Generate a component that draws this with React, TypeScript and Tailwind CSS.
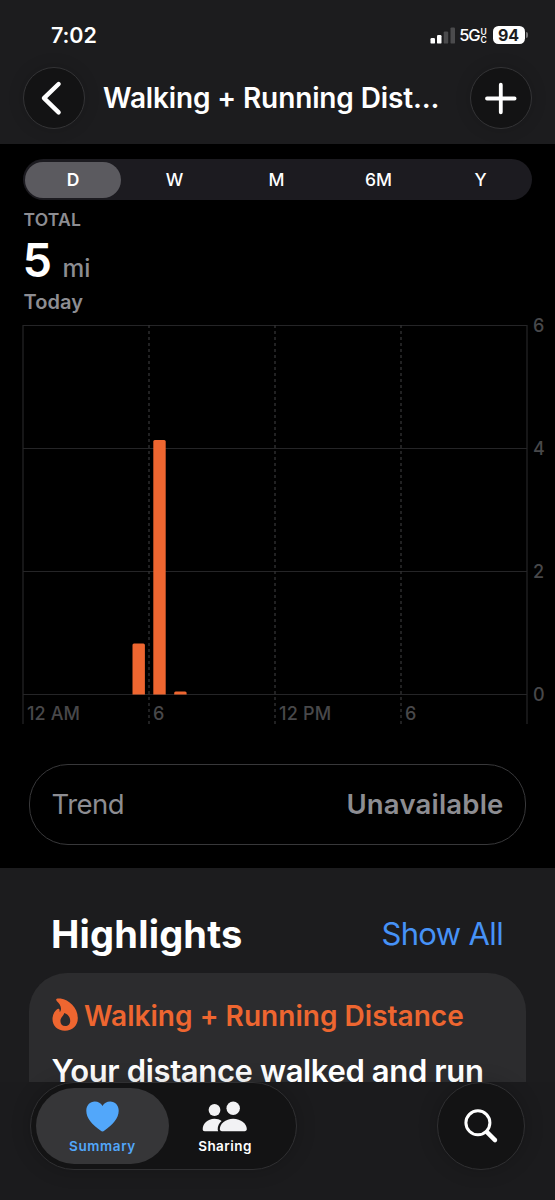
const ranges = ["D", "W", "M", "6M", "Y"];

const bars = [
  { x: 132.5, y: 643.5 },
  { x: 153.3, y: 440 },
  { x: 174.2, y: 691.5 },
];

const timeTicks = [
  { x: 149, label: "6" },
  { x: 275, label: "12 PM" },
  { x: 401, label: "6" },
];

const distanceTicks = [
  { y: 325.5, label: "6" },
  { y: 448.5, label: "4" },
  { y: 571.5, label: "2" },
  { y: 694.5, label: "0" },
];

function StatusBar() {
  return (
    <div className="flex h-[67px] items-start justify-between pt-[25px] pr-[27px] pl-[51px]">
      <span className="text-[21.5px] leading-[21px] font-semibold tracking-[-0.1px]">7:02</span>
      <div className="flex h-[20px] items-center">
        <svg width="26" height="17" viewBox="0 0 26 17" className="mr-[3.5px]">
          <rect x="0.5" y="11" width="4.5" height="5.6" rx="1.2" fill="#fff" />
          <rect x="7" y="8" width="4.5" height="8.6" rx="1.2" fill="#fff" />
          <rect x="13.7" y="4.4" width="4.5" height="12.2" rx="1.2" fill="#4b4b4d" />
          <rect x="20.5" y="0.4" width="4.5" height="16.2" rx="1.2" fill="#4b4b4d" />
        </svg>
        <span className="text-[16.5px] leading-[20px] font-medium tracking-[-1.1px]">5G</span>
        <span className="mr-[5.5px] ml-[1px] flex w-[6.5px] flex-col pt-px text-[8.5px] leading-[8px] font-semibold">
          <span>U</span>
          <span>C</span>
        </span>
        <span className="h-[18px] w-[32px] rounded-[5.5px] bg-white text-center text-[16px] leading-[18px] font-bold text-[#1c1c1e]">
          94
        </span>
        <span className="ml-[1px] h-[6px] w-[2.5px] rounded-r-full bg-[#767678]" />
      </div>
    </div>
  );
}

function Header() {
  return (
    <header className="h-[143.5px] bg-[#1c1c1e]">
      <StatusBar />
      <div className="flex items-center pr-[23.5px] pl-[23px]">
        <button className="flex size-[62px] shrink-0 items-center justify-center rounded-full border border-[#343436] bg-[#131314] shadow-[0_0_16px_rgba(0,0,0,0.15)]">
          <svg width="62" height="62" viewBox="0 0 62 62" fill="none" stroke="#fff" strokeWidth="4.4" strokeLinecap="round" strokeLinejoin="round" className="shrink-0">
            <path d="M35.6 17L21 31.2l14.6 14.2" />
          </svg>
        </button>
        <h1 className="flex-1 pl-[18px] text-[28px] leading-[62px] font-semibold tracking-[-0.13px] whitespace-nowrap">
          Walking + Running Dist...
        </h1>
        <button className="flex size-[62px] shrink-0 items-center justify-center rounded-full border border-[#343436] bg-[#131314] shadow-[0_0_16px_rgba(0,0,0,0.15)]">
          <svg width="62" height="62" viewBox="0 0 62 62" fill="none" stroke="#fff" strokeWidth="3.8" strokeLinecap="round" className="shrink-0">
            <path d="M17 31.5h27.6M30.8 17.7v27.6" />
          </svg>
        </button>
      </div>
    </header>
  );
}

function RangePicker() {
  return (
    <div className="mx-[23px] grid h-[41px] grid-cols-[96px_repeat(4,102px)] rounded-full bg-[#1c1b20] py-[2.5px] pl-[2px]">
      {ranges.map((r, i) => (
        <button
          key={r}
          className={
            i === 0
              ? "rounded-full bg-[#5b5a5f] text-[17.5px] leading-[36px] font-semibold"
              : "pl-[5px] text-[17.5px] leading-[36px] font-medium"
          }
        >
          {r}
        </button>
      ))}
    </div>
  );
}

function Chart() {
  return (
    <svg width="555" height="426" viewBox="0 314 555 426" className="block">
      <g stroke="#252527" strokeWidth="1.2">
        {distanceTicks.map((t) => (
          <line key={t.y} x1="23" x2="527" y1={t.y} y2={t.y} />
        ))}
        <line x1="23" x2="23" y1="325" y2="724" />
        <line x1="527" x2="527" y1="325" y2="724" />
      </g>
      {timeTicks.map((t) => (
        <line key={t.x} x1={t.x} x2={t.x} y1="325" y2="724" stroke="#333335" strokeWidth="1.3" strokeDasharray="3 3" />
      ))}
      <g fill="#ee6630">
        {bars.map((b) => (
          <path key={b.x} d={`M${b.x} 694.5V${b.y + 1.5}q0-1.5 1.5-1.5h9.4q1.5 0 1.5 1.5V694.5z`} />
        ))}
      </g>
      <g fill="#48484a" fontSize="18" fontWeight="500">
        {distanceTicks.map((t) => (
          <text key={t.y} x="533" y={t.y + 6.5}>
            {t.label}
          </text>
        ))}
        <text x="27" y="719.5" textLength="53">12 AM</text>
        {timeTicks.map((t) => (
          <text key={t.x} x={t.x + 4} y="719.5" letterSpacing="0.2">
            {t.label}
          </text>
        ))}
      </g>
    </svg>
  );
}

function Summary() {
  return (
    <section className="h-[724px] bg-black pt-[15.5px]">
      <RangePicker />
      <div className="px-[23.5px] pt-[8px] text-[#8d8d92]">
        <div className="text-[17.5px] leading-[24px] font-semibold tracking-[0.2px]">TOTAL</div>
        <div className="flex h-[58px] items-baseline leading-[56px]">
          <span className="-ml-px text-[47px] font-semibold text-white">5</span>
          <span className="ml-[10.5px] text-[24.5px] font-medium">mi</span>
        </div>
        <div className="text-[20px] leading-[24px] font-semibold tracking-[0.1px]">Today</div>
      </div>
      <Chart />
      <div className="mx-[29px] mt-[24px] flex h-[81px] items-center justify-between rounded-[39px] border-[1.5px] border-[#38383a] px-[21.5px] text-[27.5px] text-[#8d8d92]">
        <span className="tracking-[-0.5px]">Trend</span>
        <span className="font-semibold tracking-[0.2px]">Unavailable</span>
      </div>
    </section>
  );
}

function FlameIcon() {
  return (
    <svg width="26" height="33" viewBox="0 0 26 33" className="-mt-[2px] shrink-0">
      <path
        fill="#ee6630"
        fillRule="evenodd"
        d="M4.2 1.2C4.6.3 6 .2 8.6.6 17 2 25.8 9.5 25.8 20.3c0 7.4-5.4 12.4-12.9 12.4C5.6 32.700.5 27.8.5 21c0-5 2.700-8 4.300-9.500 1.300-1.300 2.800-.6 2.800.7l.1 1.900c.9-.8 1.300-2 1.300-3.300C9 7.800 7.400 5.500 4.900 3.200 4.300 2.600 4 1.800 4.200 1.200zM12.300 15c-.5 2.800-3.900 4.300-3.900 8 0 3 1.900 5 4.800 5 3 0 5-2 5-5.100 0-4-2.700-7-5.900-7.900z"
      />
    </svg>
  );
}

function Highlights() {
  return (
    <section className="h-[214.5px] overflow-hidden bg-[#1c1c1e] px-[29px] pt-[42px]">
      <div className="flex h-[49px] items-center justify-between px-[23px]">
        <h2 className="-ml-px text-[38px] leading-[48px] font-bold tracking-[0.2px]">Highlights</h2>
        <a className="text-[31px] leading-[48px] tracking-[-0.65px] text-[#4692f7]">Show All</a>
      </div>
      <article className="mt-[14px] h-[200px] rounded-[38px] bg-[#2c2c2e] pt-[24px] pl-[23px]">
        <div className="flex h-[38px] items-center gap-[6px] text-[28px] font-semibold tracking-[0.03px] text-[#ee6630]">
          <FlameIcon />
          <span className="whitespace-nowrap">Walking + Running Distance</span>
        </div>
        <p className="mt-[16px] -ml-[0.5px] text-[31px] leading-[40px] font-semibold tracking-[-0.36px] whitespace-nowrap">
          Your distance walked and run
        </p>
      </article>
    </section>
  );
}

function TabBar() {
  return (
    <nav className="flex h-[118px] justify-between bg-[#1b1b1d] pr-[30px] pl-[30px]">
      <div className="flex h-[88px] w-[267px] rounded-full border border-[#303032] bg-[#131314] p-[5px] shadow-[0_0_20px_rgba(0,0,0,0.2)]">
        <button className="flex w-[133px] flex-col items-center rounded-full bg-[#363638] pt-[13px] text-[#52a7fa]">
          <svg width="33" height="31" viewBox="0 0 33 31" fill="currentColor">
            <path d="M16.5 30.5c-.6 0-1.300-.5-2-1C6.300 24 .3 17.200.3 9.800.3 4.300 4 .5 8.800.5c3.400 0 6.100 1.700 7.700 4.500C18.100 2.200 20.800.5 24.200.5c4.800 0 8.500 3.800 8.500 9.300 0 7.400-6 14.200-14.200 19.700-.7.500-1.400 1-2 1z" />
          </svg>
          <span className="mt-[5px] text-[13.5px] leading-[18px] font-semibold tracking-[0.6px]">Summary</span>
        </button>
        <button className="flex w-[112px] flex-col items-center pt-[13px]">
          <svg width="46" height="31" viewBox="0 0 46 31" fill="#f2f2f4">
            <circle cx="12.5" cy="9" r="5.9" />
            <path d="M.7 28.200C.7 23 5.500 17.800 12.400 17.800c2.800 0 5.300.8 7.200 2.200-2.500 2.100-4 5.200-3.900 8.200 0 .8.200 1.500.5 2H2.700c-1.300 0-2-.7-2-2z" />
            <circle cx="31.2" cy="7.2" r="6.7" />
            <path d="M17.800 28.100c0-5.300 5.600-10.400 13.400-10.400S44.800 22.800 44.800 28.100c0 1.400-.8 2.100-2.200 2.100H20c-1.400 0-2.200-.7-2.200-2.100z" />
          </svg>
          <span className="mt-[5px] text-[13.5px] leading-[18px] font-semibold tracking-[0.45px]">Sharing</span>
        </button>
      </div>
      <button className="flex size-[88px] items-center justify-center rounded-full border border-[#303032] bg-[#131314] shadow-[0_0_20px_rgba(0,0,0,0.2)]">
        <svg width="88" height="88" viewBox="0 0 88 88" fill="none" stroke="#fff" strokeLinecap="round" className="shrink-0">
          <circle cx="40.9" cy="40.8" r="12" strokeWidth="3" />
          <path d="M50 50.1l8 8" strokeWidth="4.4" />
        </svg>
      </button>
    </nav>
  );
}

export default function App() {
  return (
    <div className="h-[1200px] w-[555px] overflow-hidden bg-[#1c1c1e] font-['Inter',sans-serif] text-white">
      <Header />
      <Summary />
      <Highlights />
      <TabBar />
    </div>
  );
}
